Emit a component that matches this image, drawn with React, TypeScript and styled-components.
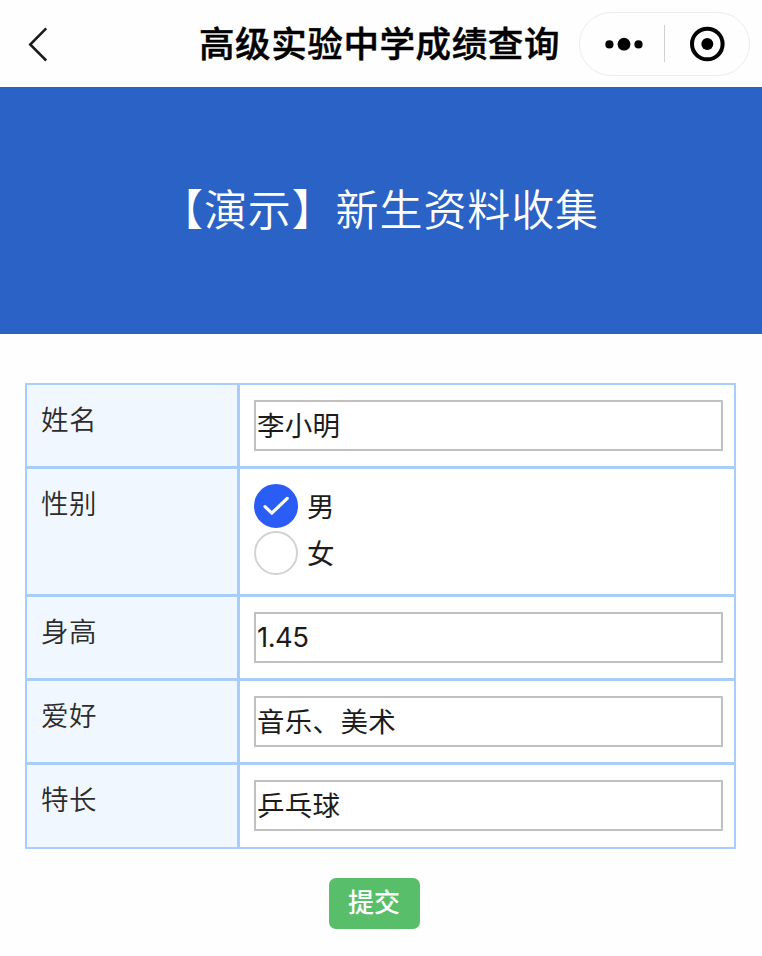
import React, { useState } from "react";
import styled, { createGlobalStyle } from "styled-components";

const GlobalStyle = createGlobalStyle`
  *, *::before, *::after { box-sizing: border-box; }
  body {
    margin: 0;
    background: #fff;
    font-family: "Noto Sans CJK SC", sans-serif;
    color: #1c1c1c;
  }
`;

const Page = styled.div`
  width: 762px;
  height: 956px;
  overflow: hidden;
  background: #fefefe;
`;

const NavBar = styled.header`
  display: grid;
  grid-template-columns: 199px 380px 171px;
  align-items: center;
  height: 87px;
`;

const BackButton = styled.button`
  width: 24px;
  height: 36px;
  margin-left: 26px;
  padding: 0;
  border: 0;
  background: none;
  svg { display: block; }
`;

const NavTitle = styled.h1`
  margin: 0 0 3px;
  font-size: 35.5px;
  line-height: 52px;
  font-weight: 500;
  letter-spacing: 0.6px;
  color: #000;
  -webkit-text-stroke: 0.5px #000;
  white-space: nowrap;
`;

const Capsule = styled.div`
  display: grid;
  grid-template-columns: 84px 1px 1fr;
  align-items: center;
  justify-items: center;
  width: 171px;
  height: 64px;
  border: 1px solid #ececec;
  border-radius: 32px;
  svg { display: block; }
`;

const MoreIcon = styled.svg`
  margin-left: 4px;
`;

const CapsuleDivider = styled.span`
  width: 1px;
  height: 37px;
  background: #d0d0d0;
`;

const Banner = styled.section`
  display: flex;
  justify-content: center;
  height: 247px;
  padding: 88px 3px 0 0;
  background: #2a62c6;
`;

const BannerTitle = styled.h2`
  margin: 0;
  font-size: 43px;
  line-height: 64px;
  font-weight: 350;
  letter-spacing: 0.9px;
  color: #fff;
  white-space: nowrap;
`;

const Form = styled.form`
  display: flex;
  flex-direction: column;
  align-items: flex-start;
  padding: 49px 0 0 25px;
`;

const Table = styled.div`
  display: grid;
  grid-template-columns: 210px 1fr;
  grid-template-rows: 81px 125px 81px 81px 82px;
  gap: 3px;
  width: 711px;
  border: 2px solid #a9cdfb;
  background: #a9cdfb;
`;

const LabelCell = styled.div`
  padding: 13px 0 0 14px;
  background: #f0f7ff;
  font-size: 27.5px;
  line-height: 40px;
  font-weight: 350;
  letter-spacing: 0.5px;
  color: #2c2c2c;
`;

const FieldCell = styled.div`
  padding: 15px 11px 0 14px;
  background: #fff;
`;

const TextInput = styled.input<{ $numeric: boolean }>`
  display: block;
  width: 469px;
  height: 51px;
  margin: 0;
  padding: ${(p) => (p.$numeric ? "0 1px 2px" : "0 1px 4px")};
  border: 2px solid #c0c0c0;
  border-radius: 0;
  outline: 0;
  background: #fff;
  font-family: Inter, "Noto Sans CJK SC", sans-serif;
  font-size: 27.5px;
  letter-spacing: ${(p) => (p.$numeric ? "-0.5px" : "0.3px")};
  color: #1c1c1c;
`;

const Option = styled.div`
  display: flex;
  align-items: center;
  gap: 9px;
  height: 44px;
  margin-bottom: 3px;
  font-size: 27.5px;
  line-height: 44px;
`;

const OptionText = styled.span`
  margin-top: -2px;
`;

const Radio = styled.span<{ $checked: boolean }>`
  display: flex;
  align-items: center;
  justify-content: center;
  width: 44px;
  height: 44px;
  border: 2px solid ${(p) => (p.$checked ? "#2a5cf6" : "#d2d2d2")};
  border-radius: 50%;
  background: ${(p) => (p.$checked ? "#2a5cf6" : "#fff")};
`;

const SubmitButton = styled.button`
  width: 91px;
  height: 51px;
  margin: 29px 0 0 304px;
  padding: 0 1px 5px 0;
  border: 0;
  border-radius: 7px;
  background: #58be6a;
  color: #fff;
  font-family: "Noto Sans CJK SC", sans-serif;
  font-size: 26px;
  line-height: 46px;
  font-weight: 500;
`;

const textFields: Record<string, string> = {
  姓名: "李小明",
  身高: "1.45",
  爱好: "音乐、美术",
  特长: "乒乓球",
};

const genders = ["男", "女"];
const rows = ["姓名", "性别", "身高", "爱好", "特长"];

export default function App() {
  const [gender, setGender] = useState("男");

  return (
    <Page>
      <GlobalStyle />
      <NavBar>
        <BackButton type="button" aria-label="返回">
          <svg width="24" height="36" viewBox="0 0 24 36" fill="none" stroke="#1a1a1a" strokeWidth="2.5">
            <path d="M20.2 2.3 4.2 18.5l16 16" />
          </svg>
        </BackButton>
        <NavTitle>高级实验中学成绩查询</NavTitle>
        <Capsule>
          <MoreIcon width="38" height="14" viewBox="0 0 38 14">
            <circle cx="4.4" cy="7.4" r="4.1" />
            <circle cx="19" cy="7.2" r="6.4" />
            <circle cx="33.5" cy="7.4" r="4.1" />
          </MoreIcon>
          <CapsuleDivider />
          <svg width="36" height="36" viewBox="0 0 36 36">
            <circle cx="18.3" cy="18" r="15.3" fill="none" stroke="#000" strokeWidth="4" />
            <circle cx="18.3" cy="18" r="6" />
          </svg>
        </Capsule>
      </NavBar>
      <Banner>
        <BannerTitle>【演示】新生资料收集</BannerTitle>
      </Banner>
      <Form onSubmit={(e) => e.preventDefault()}>
        <Table>
          {rows.map((label) => (
            <React.Fragment key={label}>
              <LabelCell>{label}</LabelCell>
              <FieldCell>
                {label in textFields ? (
                  <TextInput
                    aria-label={label}
                    $numeric={/^[\d.]+$/.test(textFields[label])}
                    defaultValue={textFields[label]}
                  />
                ) : (
                  genders.map((g) => (
                    <Option key={g} onClick={() => setGender(g)}>
                      <Radio $checked={g === gender}>
                        {g === gender && (
                          <svg width="28" height="22" viewBox="0 0 28 22" fill="none" stroke="#fff" strokeWidth="3.2" strokeLinecap="round" strokeLinejoin="round">
                            <path d="M3 11.6 9.8 18.2 25.2 3.4" />
                          </svg>
                        )}
                      </Radio>
                      <OptionText>{g}</OptionText>
                    </Option>
                  ))
                )}
              </FieldCell>
            </React.Fragment>
          ))}
        </Table>
        <SubmitButton type="submit">提交</SubmitButton>
      </Form>
    </Page>
  );
}
